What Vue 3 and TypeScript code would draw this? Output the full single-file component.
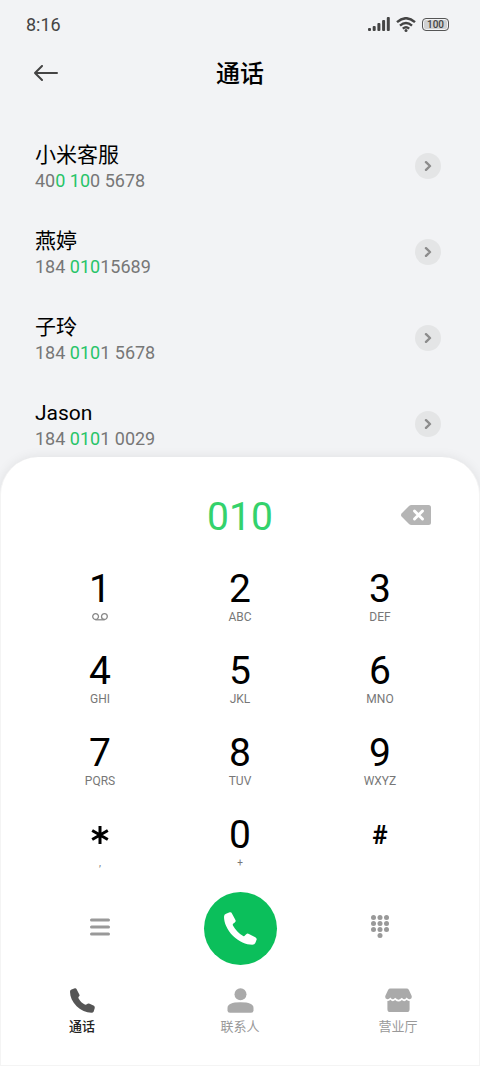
<script setup lang="ts">
import { ref } from 'vue'

interface Contact {
  name: string
  phone: string
}

interface Key {
  digit: string
  label: string
}

const contacts: Contact[] = [
  { name: '小米客服', phone: '400 100 5678' },
  { name: '燕婷', phone: '184 01015689' },
  { name: '子玲', phone: '184 0101 5678' },
  { name: 'Jason', phone: '184 0101 0029' },
]

const keys: Key[] = [
  { digit: '1', label: '' },
  { digit: '2', label: 'ABC' },
  { digit: '3', label: 'DEF' },
  { digit: '4', label: 'GHI' },
  { digit: '5', label: 'JKL' },
  { digit: '6', label: 'MNO' },
  { digit: '7', label: 'PQRS' },
  { digit: '8', label: 'TUV' },
  { digit: '9', label: 'WXYZ' },
  { digit: '*', label: ',' },
  { digit: '0', label: '+' },
  { digit: '#', label: '' },
]

const dialed = ref('010')

// Splits a number into before / match / after, ignoring spaces while matching.
function split(phone: string): [string, string, string] {
  const positions = [...phone].map((c, i) => (c === ' ' ? -1 : i)).filter((i) => i >= 0)
  const start = phone.replace(/ /g, '').indexOf(dialed.value)
  if (!dialed.value || start < 0) return [phone, '', '']
  const from = positions[start]
  const to = positions[start + dialed.value.length - 1] + 1
  return [phone.slice(0, from), phone.slice(from, to), phone.slice(to)]
}

function press(digit: string) {
  dialed.value += digit
}

function erase() {
  dialed.value = dialed.value.slice(0, -1)
}
</script>

<template>
  <div class="screen">
    <div class="status">
      <span class="clock">8:16</span>
      <div class="indicators">
        <svg class="signal" viewBox="0 0 22 14" aria-hidden="true">
          <rect x="0" y="11" width="3" height="3" rx="1" />
          <rect x="4.7" y="9" width="3" height="5" rx="1" />
          <rect x="9.4" y="6" width="3" height="8" rx="1" />
          <rect x="14.1" y="3" width="3" height="11" rx="1" />
          <rect x="18.8" y="0" width="3" height="14" rx="1" />
        </svg>
        <svg class="wifi" viewBox="0 0 20 15" aria-hidden="true">
          <path d="M1 5.2Q10-2.8 19 5.2M4 8.6Q10 3.4 16 8.6M6.8 11.6Q10 9 13.2 11.6" />
          <circle cx="10" cy="13.4" r="1.5" />
        </svg>
        <span class="battery">100</span>
      </div>
    </div>

    <header class="header">
      <button class="back" type="button" aria-label="返回">
        <svg viewBox="0 0 24 16" aria-hidden="true"><path d="M8 1 1 8l7 7M1 8h22" /></svg>
      </button>
      <h1 class="title">通话</h1>
    </header>

    <ul class="contacts">
      <li v-for="c in contacts" :key="c.name" class="contact">
        <div class="who">
          <span class="name">{{ c.name }}</span>
          <span class="phone">{{ split(c.phone)[0] }}<span class="hit">{{ split(c.phone)[1] }}</span>{{ split(c.phone)[2] }}</span>
        </div>
        <button class="more" type="button" :aria-label="c.name">
          <svg viewBox="0 0 8 10" aria-hidden="true"><path d="M2 1.200l4 3.800-4 3.800" /></svg>
        </button>
      </li>
    </ul>

    <section class="sheet">
      <div class="display">
        <input v-model="dialed" class="number" type="text" inputmode="none" aria-label="号码" />
        <button class="erase" type="button" aria-label="删除" @click="erase">
          <svg viewBox="0 0 30 20" aria-hidden="true">
            <path class="tag" d="M10.500 0H27.500Q30 0 30 2.500V17.500Q30 20 27.500 20H10.500Q9 20 8 19L.8 11.800Q-.8 10 .8 8.200L8 1Q9 0 10.500 0z" />
            <path class="cross" d="M13.500 6l8 8M21.500 6l-8 8" />
          </svg>
        </button>
      </div>

      <div class="keypad">
        <button v-for="k in keys" :key="k.digit" class="key" type="button" :aria-label="k.digit" @click="press(k.digit)">
          <span class="digit">
            <svg v-if="k.digit === '*'" class="star" viewBox="0 0 18 18" aria-hidden="true">
              <path d="M9 0v18M1.200 4.500l15.600 9M16.800 4.500l-15.600 9" />
            </svg>
            <span v-else-if="k.digit === '#'" class="hash">#</span>
            <template v-else>{{ k.digit }}</template>
          </span>
          <span class="label" :class="{ faint: k.label.length === 1 }">
            <svg v-if="k.digit === '1'" class="voicemail" viewBox="0 0 16 8" aria-hidden="true">
              <circle cx="3.600" cy="3.600" r="2.900" />
              <circle cx="12.400" cy="3.600" r="2.900" />
              <path d="M3.600 6.800h8.800" />
            </svg>
            <template v-else>{{ k.label }}</template>
          </span>
        </button>
      </div>

      <div class="actions">
        <button class="action" type="button" aria-label="菜单">
          <svg class="menu" viewBox="0 0 20 18" aria-hidden="true">
            <path d="M1.500 2h17M1.500 9h17M1.500 16h17" />
          </svg>
        </button>
        <button class="call" type="button" aria-label="拨打">
          <svg viewBox="0 0 98 98" aria-hidden="true">
            <path d="M6 5 17 1Q22 0 24 5L34 24Q36 28 32 31L27 35Q25 37 27 41C34 54 44 64 57 71Q60 73 62 70L66 66Q69 63 74 65L93 75Q98 78 97 82L93 92Q91 97 84 97C65 97 45 88 27 71C9 53 0 32 0 14Q0 7 6 5z" />
          </svg>
        </button>
        <button class="action" type="button" aria-label="键盘">
          <svg class="dots" viewBox="0 0 18 23" aria-hidden="true">
            <circle cx="2.500" cy="2.500" r="2.500" /><circle cx="9" cy="2.500" r="2.500" /><circle cx="15.500" cy="2.500" r="2.500" />
            <circle cx="2.500" cy="8.500" r="2.500" /><circle cx="9" cy="8.500" r="2.500" /><circle cx="15.500" cy="8.500" r="2.500" />
            <circle cx="2.500" cy="14.500" r="2.500" /><circle cx="9" cy="14.500" r="2.500" /><circle cx="15.500" cy="14.500" r="2.500" />
            <circle cx="9" cy="20.500" r="2.500" />
          </svg>
        </button>
      </div>

      <nav class="tabs">
        <button class="tab active" type="button">
          <svg viewBox="0 0 98 98" aria-hidden="true">
            <path d="M6 6 19 1Q24 0 26 5L37 26Q39 30 35 33L33 35Q32 38 35 43C41 53 48 59 56 64Q60 67 64 65L69 62Q73 60 77 62L94 70Q98 73 97 78L93 92Q91 97 84 97C63 97 43 88 26 72C9 55 0 34 0 15Q0 8 6 6z" />
          </svg>
          <span>通话</span>
        </button>
        <button class="tab" type="button">
          <svg viewBox="0 0 26 25" aria-hidden="true">
            <circle cx="13" cy="6.200" r="6" />
            <path d="M0 22.500V20Q0 14.300 13 14.300T26 20V22.500Q26 24.700 23.500 24.700H2.500Q0 24.700 0 22.500z" />
          </svg>
          <span>联系人</span>
        </button>
        <button class="tab" type="button">
          <svg viewBox="0 0 28 25" aria-hidden="true">
            <path d="M5.500 0H22.500Q24 0 24.800 1.500L27.600 7.500Q28.500 11 25.500 11.200Q23.500 11.200 22.500 9.500Q20.300 13 17.500 9.700Q14 13.500 10.500 9.700Q7.700 13 5.500 9.500Q4.500 11.200 2.500 11.200Q-.5 11 .4 7.500L3.200 1.500Q4 0 5.500 0z" />
            <path d="M2.500 13Q4.500 13 5.500 11.700Q8 14.500 10.500 12Q14 15.200 17.500 12Q20 14.500 22.500 11.700Q23.500 13 25.500 13V21.500Q25.500 24.500 22.500 24.500H5.500Q2.500 24.500 2.500 21.500z" />
          </svg>
          <span>营业厅</span>
        </button>
      </nav>
    </section>
  </div>
</template>

<style>
body {
  background: #f2f3f5;
}
</style>

<style scoped>
.screen {
  display: flex;
  flex-direction: column;
  min-height: 100vh;
  background: #f2f3f5;
  color: #000;
  font-family: Roboto, 'Noto Sans CJK SC', sans-serif;
}

button {
  display: flex;
  align-items: center;
  justify-content: center;
  margin: 0;
  padding: 0;
  border: 0;
  background: none;
  color: inherit;
  font-family: inherit;
  cursor: pointer;
}

svg {
  display: block;
}

.status {
  display: flex;
  align-items: center;
  justify-content: space-between;
  height: 48px;
  padding: 0 31px 0 26px;
  color: #444;
}

.clock {
  font-size: 18px;
}

.indicators {
  display: flex;
  align-items: center;
  gap: 6px;
}

.signal {
  width: 22px;
  height: 14px;
  fill: #444;
}

.wifi {
  width: 20px;
  height: 15px;
  fill: #444;
}

.wifi path {
  fill: none;
  stroke: #444;
  stroke-width: 2.4;
}

.battery {
  box-sizing: border-box;
  width: 27px;
  height: 13px;
  border: 1px solid #555;
  border-radius: 4px;
  background: #d0d1d2;
  box-shadow: inset 0 0 0 1px #f2f3f5;
  font-size: 10px;
  font-weight: 500;
  line-height: 11px;
  text-align: center;
}

.header {
  display: grid;
  grid-template-columns: 24px 1fr 24px;
  align-items: center;
  height: 50px;
  padding: 0 34px;
}

.back svg {
  width: 24px;
  height: 16px;
  fill: none;
  stroke: #444;
  stroke-width: 2;
  stroke-linecap: round;
  stroke-linejoin: round;
}

.title {
  margin: 0;
  padding-top: 2px;
  font-size: 24px;
  font-weight: 500;
  line-height: 32px;
  text-align: center;
}

.contacts {
  margin: 25px 0 0;
  padding: 0 39px 0 35px;
  list-style: none;
}

.contact {
  display: flex;
  align-items: center;
  justify-content: space-between;
  height: 86px;
}

.who {
  display: flex;
  flex-direction: column;
  padding-top: 2px;
}

.name {
  font-size: 21px;
  line-height: 28px;
}

.phone {
  color: #777;
  font-size: 18px;
  line-height: 24px;
}

.hit {
  color: #28c468;
}

.more {
  width: 26px;
  height: 26px;
  border-radius: 50%;
  background: #e4e5e6;
}

.more svg {
  width: 8px;
  height: 10px;
  fill: none;
  stroke: #8c8c8c;
  stroke-width: 2.4;
  stroke-linecap: round;
  stroke-linejoin: round;
}

.sheet {
  position: relative;
  flex: 1;
  box-sizing: border-box;
  margin-top: -10px;
  padding-top: 28px;
  border: solid #f4f4f4;
  border-width: 0 1px 1px;
  border-radius: 38px 38px 0 0;
  background: #fff;
  box-shadow: 0 0 12px rgba(0, 0, 0, 0.08);
}

.display {
  display: grid;
  grid-template-columns: 30px 1fr 30px;
  align-items: center;
  height: 60px;
  margin-bottom: 3px;
  padding: 0 48px;
}

.number {
  grid-column: 2;
  min-width: 0;
  padding: 4px 0 0;
  border: 0;
  outline: 0;
  background: none;
  color: #34d26c;
  font-family: inherit;
  font-size: 39px;
  font-weight: 400;
  line-height: 48px;
  text-align: center;
}

.erase svg {
  width: 30px;
  height: 20px;
}

.tag {
  fill: #b5b5b5;
}

.cross {
  fill: none;
  stroke: #fff;
  stroke-width: 3;
  stroke-linecap: round;
}

.keypad,
.actions {
  display: grid;
  grid-template-columns: repeat(3, 1fr);
  padding: 0 29px;
}

.key {
  flex-direction: column;
  justify-content: flex-start;
  height: 82px;
  padding-top: 19px;
}

.digit {
  display: flex;
  align-items: center;
  height: 44px;
  font-size: 39px;
  line-height: 44px;
}

.star {
  width: 18px;
  height: 18px;
  fill: none;
  stroke: #000;
  stroke-width: 3;
}

.hash {
  font-size: 26px;
  font-weight: 700;
}

.label {
  display: flex;
  align-items: center;
  height: 12px;
  color: #777;
  font-size: 12px;
  line-height: 12px;
}

.faint {
  font-size: 10px;
}

.voicemail {
  width: 16px;
  height: 8px;
  fill: none;
  stroke: #888;
  stroke-width: 1.3;
}

.actions {
  align-items: center;
  justify-items: center;
  padding-top: 16px;
}

.action {
  width: 48px;
  height: 48px;
  padding-bottom: 4px;
}

.menu {
  width: 20px;
  height: 18px;
  fill: none;
  stroke: #999;
  stroke-width: 3;
  stroke-linecap: round;
}

.dots {
  width: 18px;
  height: 23px;
  fill: #999;
}

.call {
  width: 73px;
  height: 73px;
  border-radius: 50%;
  background: #0bbf5b;
}

.call svg {
  width: 33px;
  height: 33px;
  fill: #fff;
}

.tabs {
  display: grid;
  grid-template-columns: repeat(3, 1fr);
  padding: 23px 2px 24px;
}

.tab {
  flex-direction: column;
  gap: 4px;
  color: #999;
  font-size: 13px;
  line-height: 20px;
}

.tab svg {
  width: 27px;
  height: 25px;
  fill: #aaa;
}

.active {
  color: #222;
  font-weight: 500;
}

.tab.active svg {
  fill: #555;
}
</style>
